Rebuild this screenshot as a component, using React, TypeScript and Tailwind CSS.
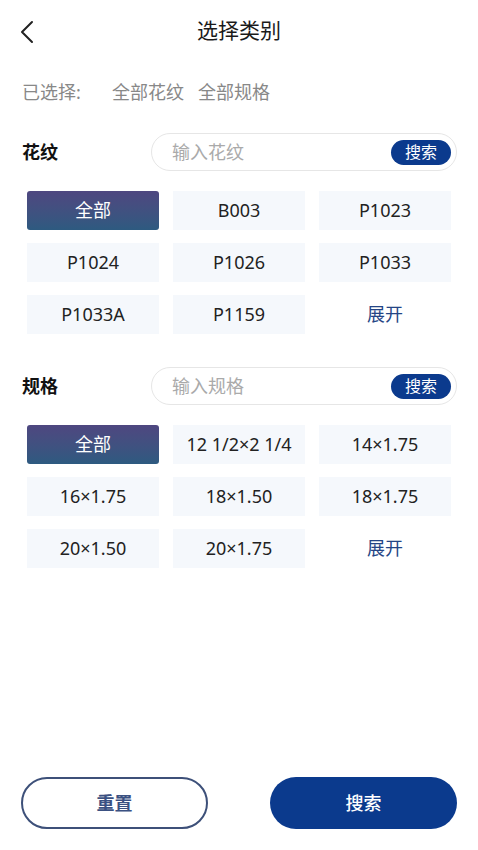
import React from "react";

const font = { fontFamily: '"Noto Sans", "Noto Sans CJK SC", sans-serif' };

function Cell({ label, selected, link }: { label: string; selected?: boolean; link?: boolean }) {
  if (selected) {
    return (
      <div className="h-[39px] rounded-[3px] bg-gradient-to-b from-[#4e4780] to-[#2d5a80] flex items-center justify-center text-white text-[18px]">
        {label}
      </div>
    );
  }
  if (link) {
    return (
      <div className="h-[39px] flex items-center justify-center text-[#244585] text-[18px]">{label}</div>
    );
  }
  return (
    <div className="h-[39px] bg-[#f5f8fc] flex items-center justify-center text-[#222] text-[18px]">{label}</div>
  );
}

function Section({ title, placeholder, items }: { title: string; placeholder: string; items: string[] }) {
  return (
    <div>
      <div className="flex items-center pl-[22px] pr-[21px]">
        <div className="w-[129px] text-[18px] font-bold text-[#111]">{title}</div>
        <div className="flex-1 h-[38px] rounded-full border border-[#e6e6e6] flex items-center pl-[20px] pr-[5px]">
          <span className="flex-1 text-[18px] text-[#aaa]">{placeholder}</span>
          <span className="h-[25px] w-[60px] rounded-full bg-[#0b3a8d] text-white text-[16px] flex items-center justify-center">搜索</span>
        </div>
      </div>
      <div className="mt-[20px] ml-[27px] w-[424px] grid grid-cols-3 gap-x-[14px] gap-y-[13px]">
        <Cell label="全部" selected />
        {items.map((it) => (
          <Cell key={it} label={it} />
        ))}
        <Cell label="展开" link />
      </div>
    </div>
  );
}

export default function App() {
  return (
    <div style={font} className="w-[478px] h-[850px] bg-white flex flex-col">
      <div className="h-[62px] relative flex items-center justify-center">
        <svg className="absolute left-[19px] top-[20px]" width="16" height="24" viewBox="0 0 16 24" fill="none">
          <path d="M13 2 L3 12 L13 22" stroke="#222" strokeWidth="2" strokeLinecap="round" strokeLinejoin="round" />
        </svg>
        <span className="text-[21px] text-[#1a1a1a] font-normal">选择类别</span>
      </div>
      <div className="mt-[18px] h-[24px] pl-[22px] flex items-center text-[18px] text-[#888]">
        <span className="w-[90px]">已选择:</span>
        <span>全部花纹</span>
        <span className="ml-[14px]">全部规格</span>
      </div>
      <div className="mt-[29px]">
        <Section title="花纹" placeholder="输入花纹" items={["B003", "P1023", "P1024", "P1026", "P1033", "P1033A", "P1159"]} />
      </div>
      <div className="mt-[33px]">
        <Section
          title="规格"
          placeholder="输入规格"
          items={["12 1/2×2 1/4", "14×1.75", "16×1.75", "18×1.50", "18×1.75", "20×1.50", "20×1.75"]}
        />
      </div>
      <div className="flex-1" />
      <div className="flex justify-between px-[21px] pb-[21px]">
        <div className="w-[187px] h-[52px] rounded-full border-2 border-[#3d5079] flex items-center justify-center text-[18px] font-bold text-[#3b5182]">
          重置
        </div>
        <div className="w-[187px] h-[52px] rounded-full bg-[#0b3a8d] flex items-center justify-center text-[18px] font-medium text-white">
          搜索
        </div>
      </div>
    </div>
  );
}
